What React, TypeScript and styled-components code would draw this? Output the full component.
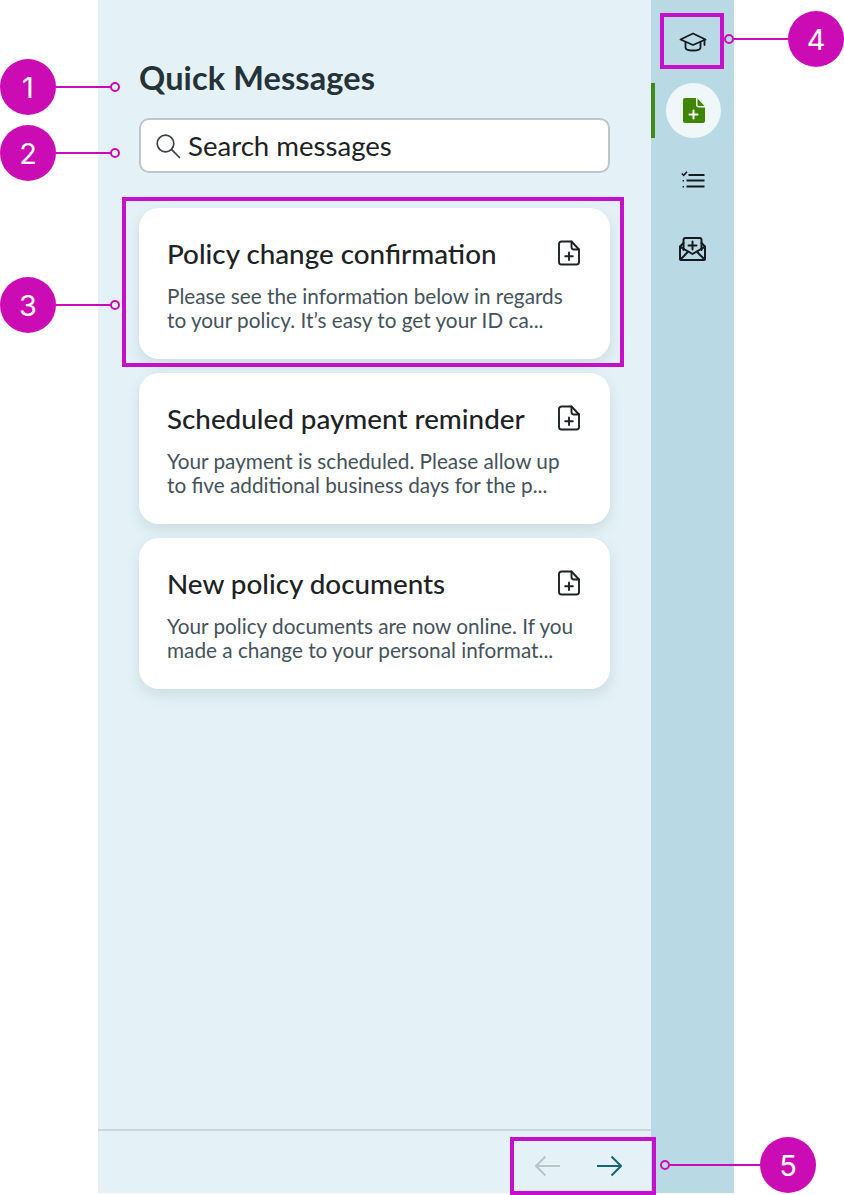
import React from "react";
import styled, { createGlobalStyle } from "styled-components";

const Global = createGlobalStyle`
  html, body { margin: 0; padding: 0; background: #fff; }
  body { font-family: "Lato", "Liberation Sans", sans-serif; }
`;

const Page = styled.div`
  position: relative;
  width: 844px;
  height: 1195px;
  overflow: hidden;
  background: #fff;
`;
const Shell = styled.div`
  display: flex;
  width: 636px;
  height: 1193px;
  margin-left: 98px;
`;
const Panel = styled.main`
  width: 553px;
  display: flex;
  flex-direction: column;
  background: #e4f2f7;
`;
const Content = styled.div`
  flex: 1;
  display: flex;
  flex-direction: column;
  padding: 57px 41px 0;
`;
const Title = styled.h1`
  margin: 0 0 20px;
  font: 700 32.5px/41px "Lato", sans-serif;
  letter-spacing: 0.1px;
  color: #253238;
`;
const Search = styled.div`
  box-sizing: border-box;
  height: 55px;
  display: flex;
  align-items: center;
  gap: 7px;
  padding: 0 14px;
  background: #fff;
  border: 2px solid #bcc6c9;
  border-radius: 10px;
  font-size: 27.6px;
  color: #1d2225;
  margin-bottom: 35px;
`;
const Cards = styled.div`
  display: flex;
  flex-direction: column;
  gap: 14px;
`;
const Card = styled.article`
  box-sizing: border-box;
  height: 151px;
  padding: 26px 29px 0 28px;
  background: #fff;
  border-radius: 20px;
  box-shadow: 0 6px 14px rgba(60, 90, 100, 0.14);
`;
const CardHead = styled.div`
  display: flex;
  justify-content: space-between;
  align-items: center;
  height: 40px;
  margin-bottom: 10px;
  svg {
    margin-top: -2px;
  }
`;
const CardTitle = styled.h2`
  margin: 0;
  font: 500 27.8px/40px "Lato", sans-serif;
  color: #1d2225;
`;
const CardBody = styled.p`
  margin: 0;
  font: 400 20.75px/24px "Lato", sans-serif;
  color: #45525a;
`;
const Footer = styled.footer`
  box-sizing: border-box;
  height: 64px;
  border-top: 2px solid #cdd6d5;
  display: flex;
  justify-content: flex-end;
  align-items: center;
  gap: 37px;
  padding: 8px 29px 0 0;
`;
const Rail = styled.nav`
  width: 83px;
  display: flex;
  flex-direction: column;
  align-items: center;
  background: #b9dae4;
  padding: 14px 0 0 0;
  box-sizing: border-box;
`;
const RailItem = styled.div<{ $active?: boolean }>`
  position: relative;
  box-sizing: border-box;
  width: 83px;
  height: 55px;
  margin-bottom: 14px;
  display: flex;
  align-items: center;
  justify-content: center;
  ${(p) =>
    p.$active &&
    `padding-left: 2px;
    &::before {
      content: "";
      position: absolute;
      left: 0;
      top: 0;
      width: 4px;
      height: 55px;
      background: #3f8a1f;
    }`}
`;
const ActiveDisc = styled.div`
  width: 55px;
  height: 55px;
  border-radius: 50%;
  background: #eff7f9;
  display: flex;
  align-items: center;
  justify-content: center;
`;

const Badge = styled.div<{ $x: number; $y: number }>`
  position: absolute;
  left: ${(p) => p.$x - 28}px;
  top: ${(p) => p.$y - 28}px;
  width: 56px;
  height: 56px;
  border-radius: 50%;
  background: #cb0cb4;
  color: #fff;
  display: flex;
  align-items: center;
  justify-content: center;
  font: 400 29px/1 "Inter", sans-serif;
`;
const Leader = styled.div<{ $x: number; $y: number; $w: number }>`
  position: absolute;
  left: ${(p) => p.$x}px;
  top: ${(p) => p.$y - 1}px;
  width: ${(p) => p.$w}px;
  height: 2px;
  background: #cb0cb4;
`;
const Dot = styled.div<{ $x: number; $y: number }>`
  position: absolute;
  box-sizing: border-box;
  left: ${(p) => p.$x - 5}px;
  top: ${(p) => p.$y - 5}px;
  width: 10px;
  height: 10px;
  border: 2px solid #cb0cb4;
  border-radius: 50%;
`;
const Frame = styled.div<{ $x: number; $y: number; $w: number; $h: number }>`
  position: absolute;
  box-sizing: border-box;
  left: ${(p) => p.$x}px;
  top: ${(p) => p.$y}px;
  width: ${(p) => p.$w}px;
  height: ${(p) => p.$h}px;
  border: 4px solid #c60fca;
`;

const DocPlus = () => (
  <svg width="24" height="26" viewBox="0 0 24 26" fill="none" stroke="#1d2225" strokeWidth="1.9" strokeLinejoin="round" strokeLinecap="round">
    <path d="M4.500 1.500h10L22 9.500V22a2.500 2.500 0 0 1-2.500 2.500h-15A2.500 2.500 0 0 1 2 22V4a2.500 2.500 0 0 1 2.500-2.500Z" />
    <path d="M14.500 1.500v5.500a2.500 2.500 0 0 0 2.500 2.500h5" />
    <path d="M12 12.500v7.500M8.200 16.200h7.600" />
  </svg>
);

const Grad = () => (
  <svg width="28" height="20" viewBox="0 0 28 20" fill="none" stroke="#141a1d" strokeWidth="1.800" strokeLinejoin="round" strokeLinecap="round">
    <path d="M14 1.500 1.500 7.500 14 13l12.500-5.500Z" />
    <path d="M6.500 10v5.500c0 1.800 3.400 3 7.500 3s7.500-1.200 7.500-3V10" />
    <path d="M25.500 8.500v4.500" />
  </svg>
);

const GreenDoc = () => (
  <svg width="22" height="25" viewBox="0 0 22 25">
    <path d="M2 0h11v6.500c0 1.700 1.300 3 3 3h6V23a2 2 0 0 1-2 2H2a2 2 0 0 1-2-2V2a2 2 0 0 1 2-2Z" fill="#3f8500" />
    <path d="M14.500 0.500 21.500 8h-6a1 1 0 0 1-1-1Z" fill="#3f8500" />
    <path d="M10.500 12.500v8M6.500 16.500h8" stroke="#fff" strokeWidth="2" strokeLinecap="round" />
  </svg>
);

const Checklist = () => (
  <svg width="24" height="17" viewBox="0 0 24 17" fill="none" stroke="#141a1d">
    <path d="M.8 2.500 2.700 4.300 6 .8" strokeWidth="1.600" />
    <path d="M7.500 4h16M5.500 9.500h18M5.500 15.500h18" strokeWidth="1.900" />
    <path d="M2.300 9v1.400M2.300 15v1.400" strokeWidth="1.400" />
  </svg>
);

const MailPlus = () => (
  <svg width="27" height="24" viewBox="0 0 27 24" fill="none" stroke="#141a1d" strokeWidth="2" strokeLinejoin="round" strokeLinecap="round">
    <path d="M4.500 13V3a2 2 0 0 1 2-2h14a2 2 0 0 1 2 2v10" />
    <path d="M4.500 6 1 9.500v12A1.500 1.500 0 0 0 2.500 23h22a1.500 1.500 0 0 0 1.500-1.500v-12L22.500 6" />
    <path d="M1.200 9.800 13.500 17 25.800 9.800" />
    <path d="M1.500 22.500 9 14.800M25.500 22.500 18 14.800" />
    <path d="M13.500 4.500v8M9.500 8.500h8" />
  </svg>
);

const SearchIcon = () => (
  <svg width="26" height="26" viewBox="0 0 26 26" fill="none" stroke="#3b4348" strokeWidth="1.700" strokeLinecap="round">
    <circle cx="10.500" cy="10.500" r="8.300" />
    <path d="m16.700 16.700 7.800 7.800" />
  </svg>
);

const Arrow = ({ color, flip }: { color: string; flip?: boolean }) => (
  <svg width="25" height="22" viewBox="0 0 25 22" fill="none" stroke={color} strokeWidth="2" style={flip ? { transform: "scaleX(-1)" } : undefined}>
    <path d="M0 11h24M14.500 1.500 24 11l-9.500 9.500" />
  </svg>
);

const messages = [
  { title: "Policy change confirmation", body: ["Please see the information below in regards", "to your policy. It’s easy to get your ID ca..."] },
  { title: "Scheduled payment reminder", body: ["Your payment is scheduled. Please allow up", "to five additional business days for the p..."] },
  { title: "New policy documents", body: ["Your policy documents are now online. If you", "made a change to your personal informat..."] },
];

const notes = [
  { n: 1, x: 28, y: 87, dot: 115, from: 56, w: 54 },
  { n: 2, x: 28, y: 153, dot: 115, from: 56, w: 54 },
  { n: 3, x: 28, y: 305, dot: 115, from: 56, w: 54 },
  { n: 4, x: 816, y: 39, dot: 729, from: 734, w: 54 },
  { n: 5, x: 788, y: 1165, dot: 665, from: 670, w: 90 },
];

export default function App() {
  return (
    <Page>
      <Global />
      <Shell>
        <Panel>
          <Content>
            <Title>Quick Messages</Title>
            <Search>
              <SearchIcon />
              Search messages
            </Search>
            <Cards>
              {messages.map((m) => (
                <Card key={m.title}>
                  <CardHead>
                    <CardTitle>{m.title}</CardTitle>
                    <DocPlus />
                  </CardHead>
                  <CardBody>
                    {m.body[0]}
                    <br />
                    {m.body[1]}
                  </CardBody>
                </Card>
              ))}
            </Cards>
          </Content>
          <Footer>
            <Arrow color="#b9c6c6" flip />
            <Arrow color="#14647a" />
          </Footer>
        </Panel>
        <Rail>
          <RailItem><Grad /></RailItem>
          <RailItem $active>
            <ActiveDisc><GreenDoc /></ActiveDisc>
          </RailItem>
          <RailItem><Checklist /></RailItem>
          <RailItem><MailPlus /></RailItem>
        </Rail>
      </Shell>

      <Frame $x={122} $y={197} $w={502} $h={170} />
      <Frame $x={660} $y={13} $w={64} $h={56} />
      <Frame $x={510} $y={1137} $w={146} $h={58} />
      {notes.map((a) => (
        <React.Fragment key={a.n}>
          <Leader $x={a.from} $y={a.y} $w={a.w} />
          <Dot $x={a.dot} $y={a.y} />
          <Badge $x={a.x} $y={a.y}>{a.n}</Badge>
        </React.Fragment>
      ))}
    </Page>
  );
}
